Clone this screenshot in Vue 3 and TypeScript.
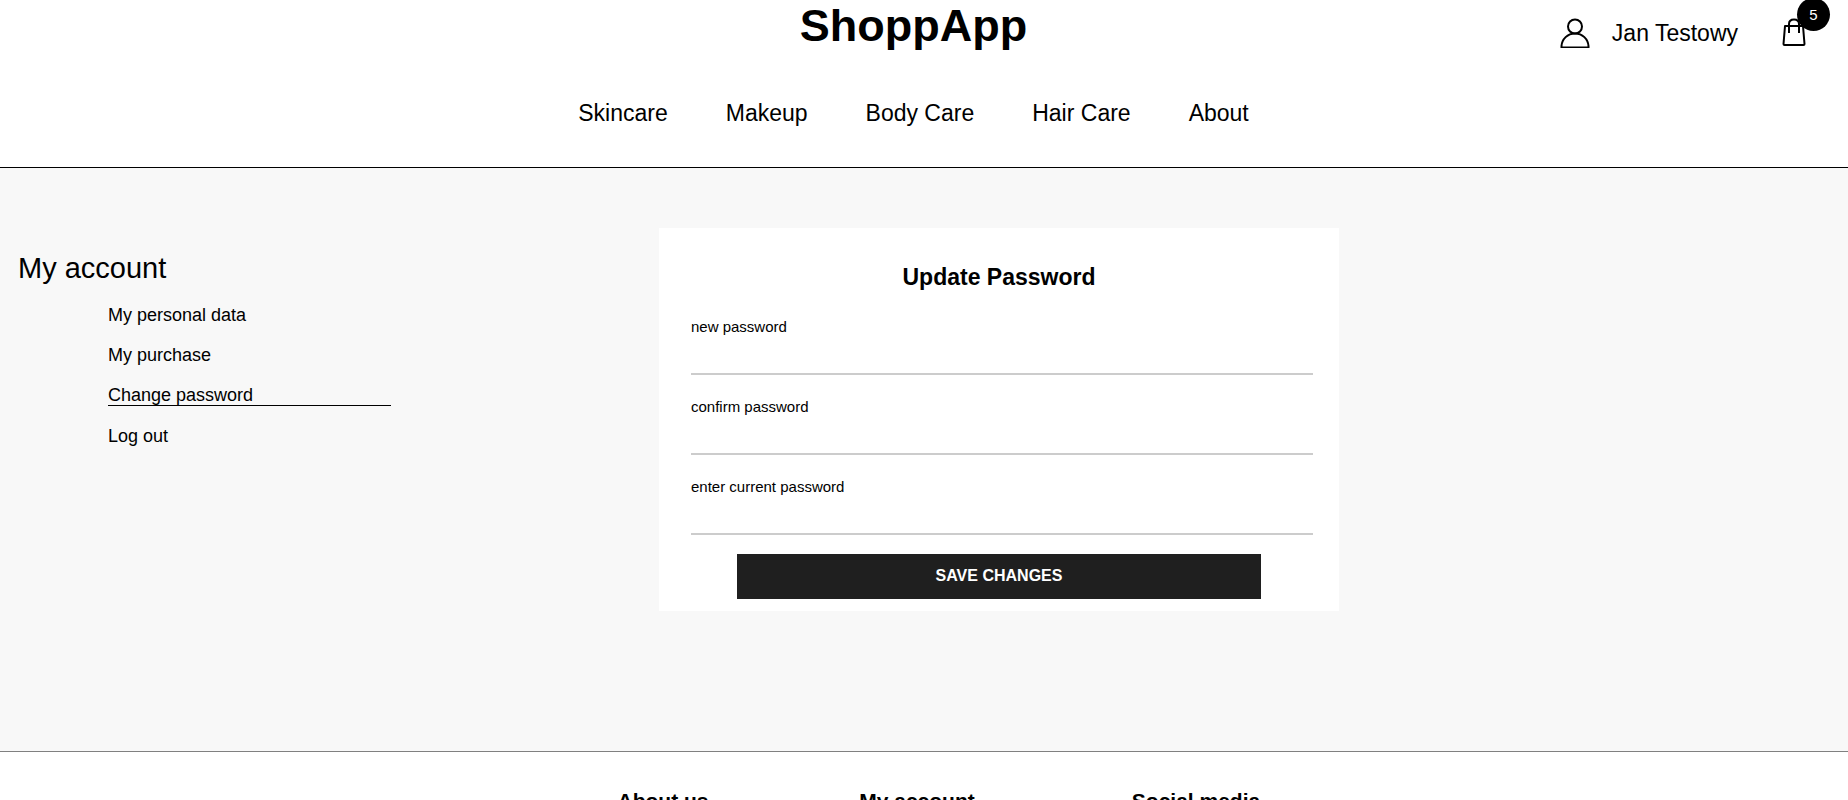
<script setup lang="ts">
import { reactive, ref } from 'vue'

interface Field {
  id: 'next' | 'confirm' | 'current'
  label: string
  autocomplete: string
}

const categories: string[] = ['Skincare', 'Makeup', 'Body Care', 'Hair Care', 'About']
const accountLinks: string[] = ['My personal data', 'My purchase', 'Change password', 'Log out']
const footerTitles: string[] = ['About us', 'My account', 'Social media']
const activeLink = ref('Change password')
const cartCount = ref(5)

const fields: Field[] = [
  { id: 'next', label: 'new password', autocomplete: 'new-password' },
  { id: 'confirm', label: 'confirm password', autocomplete: 'new-password' },
  { id: 'current', label: 'enter current password', autocomplete: 'current-password' },
]
const form = reactive({ next: '', confirm: '', current: '' })

function save(): void {
  form.next = ''
  form.confirm = ''
  form.current = ''
}
</script>

<template>
  <div class="page">
    <header class="header">
      <div class="brand">
        <h1 class="logo"><a href="#">ShoppApp</a></h1>
        <nav aria-label="Categories">
          <ul class="nav">
            <li v-for="item in categories" :key="item"><a href="#">{{ item }}</a></li>
          </ul>
        </nav>
      </div>
      <div class="user">
        <a class="profile" href="#">
          <svg width="30" height="30" viewBox="0 0 30 30" fill="none" stroke="#000" stroke-width="2" aria-hidden="true">
            <circle cx="15" cy="8.500" r="7" />
            <path d="M1.500 29.500V28C2 21 7.500 15.500 15 15.500S28 21 28.500 28V29.500Z" />
          </svg>
          <span>Jan Testowy</span>
        </a>
        <a class="cart" href="#" aria-label="Cart">
          <svg width="24" height="28" viewBox="0 0 24 28" fill="none" stroke="#000" stroke-width="2" stroke-linejoin="round" aria-hidden="true">
            <path d="M3 8H21L22.500 26Q22.500 27 21.500 27H2.500Q1.500 27 1.500 26Z" />
            <path d="M7 15V6Q7 1.500 12 1.500T17 6V15" />
          </svg>
          <span class="badge">{{ cartCount }}</span>
        </a>
      </div>
    </header>

    <main class="main">
      <aside class="sidebar">
        <h2 class="side-title">My account</h2>
        <ul class="side-list">
          <li v-for="item in accountLinks" :key="item">
            <a href="#" :class="{ active: item === activeLink }" @click.prevent="activeLink = item">{{ item }}</a>
          </li>
        </ul>
      </aside>

      <form class="card" @submit.prevent="save">
        <h2 class="card-title">Update Password</h2>
        <div class="fields">
          <div v-for="field in fields" :key="field.id" class="field">
            <label :for="field.id">{{ field.label }}</label>
            <input :id="field.id" v-model="form[field.id]" type="password" :autocomplete="field.autocomplete" />
          </div>
        </div>
        <button class="save" type="submit">SAVE CHANGES</button>
      </form>
    </main>

    <footer class="footer">
      <h3 v-for="title in footerTitles" :key="title">{{ title }}</h3>
    </footer>
  </div>
</template>

<style>
body {
  margin: 0;
  background: #fff;
}
</style>

<style scoped>
.page {
  font-family: "Liberation Sans", Arial, sans-serif;
  color: #000;
}
a {
  color: inherit;
  text-decoration: none;
}
ul {
  list-style: none;
  margin: 0;
  padding: 0;
}
h1,
h2,
h3 {
  margin: 0;
}
.header {
  display: grid;
  grid-template-columns: 1fr auto 1fr;
  padding: 0 36px 41px 15px;
  border-bottom: 1px solid #000;
}
.brand {
  grid-column: 2;
  text-align: center;
}
.logo {
  font-size: 45px;
  line-height: 51px;
  margin-bottom: 49px;
}
.nav {
  display: flex;
  justify-content: center;
  gap: 58px;
  font-size: 23px;
  line-height: 26px;
}
.user {
  display: flex;
  justify-content: flex-end;
  align-items: flex-start;
  gap: 44px;
}
.profile {
  display: flex;
  align-items: center;
  gap: 22px;
  margin-top: 18px;
  font-size: 23px;
  line-height: 30px;
}
.cart {
  position: relative;
  margin: 18px 6px 0 0;
}
.cart svg,
.profile svg {
  display: block;
}
.badge {
  position: absolute;
  top: -20px;
  right: -24px;
  width: 33px;
  height: 33px;
  border-radius: 50%;
  background: #000;
  color: #fff;
  font-size: 15px;
  line-height: 33px;
  text-align: center;
}
.main {
  display: grid;
  grid-template-columns: 391fr 268fr 680fr 509fr;
  align-items: start;
  padding: 60px 0 140px;
  background: #f8f8f8;
}
.sidebar {
  padding: 23px 0 0 18px;
}
.side-title {
  font-size: 29px;
  line-height: 34px;
  font-weight: 400;
}
.side-list {
  display: grid;
  gap: 20px;
  margin: 20px 0 0 90px;
  font-size: 18px;
  line-height: 20px;
}
.side-list a {
  display: block;
}
.side-list .active {
  border-bottom: 1px solid #000;
}
.card {
  grid-column: 3;
  padding: 35px 0 12px;
  background: #fff;
}
.card-title {
  font-size: 23px;
  line-height: 28px;
  text-align: center;
}
.fields {
  display: grid;
  gap: 23px;
  margin: 27px 26px 19px 32px;
}
.field {
  display: flex;
  flex-direction: column;
  font-size: 15px;
  line-height: 18px;
}
.field input {
  box-sizing: border-box;
  width: 100%;
  height: 39px;
  padding: 8px 0;
  border: 0;
  border-bottom: 2px solid #ccc;
  background: transparent;
  font: inherit;
  outline: none;
}
.field input:focus-visible {
  border-color: #000;
}
.save {
  display: block;
  width: calc(100% - 156px);
  height: 45px;
  margin: 0 auto;
  padding: 0 0 2px;
  border: 0;
  background: #1f1f1f;
  color: #fff;
  font-family: inherit;
  font-size: 16px;
  font-weight: 700;
  cursor: pointer;
}
.footer {
  display: grid;
  grid-template-columns: 140px 140px 190px;
  justify-content: center;
  gap: 114px;
  padding: 37px 0 40px 36px;
  border-top: 1px solid #808080;
  text-align: center;
}
.footer h3 {
  font-size: 21px;
  line-height: 24px;
}
</style>
